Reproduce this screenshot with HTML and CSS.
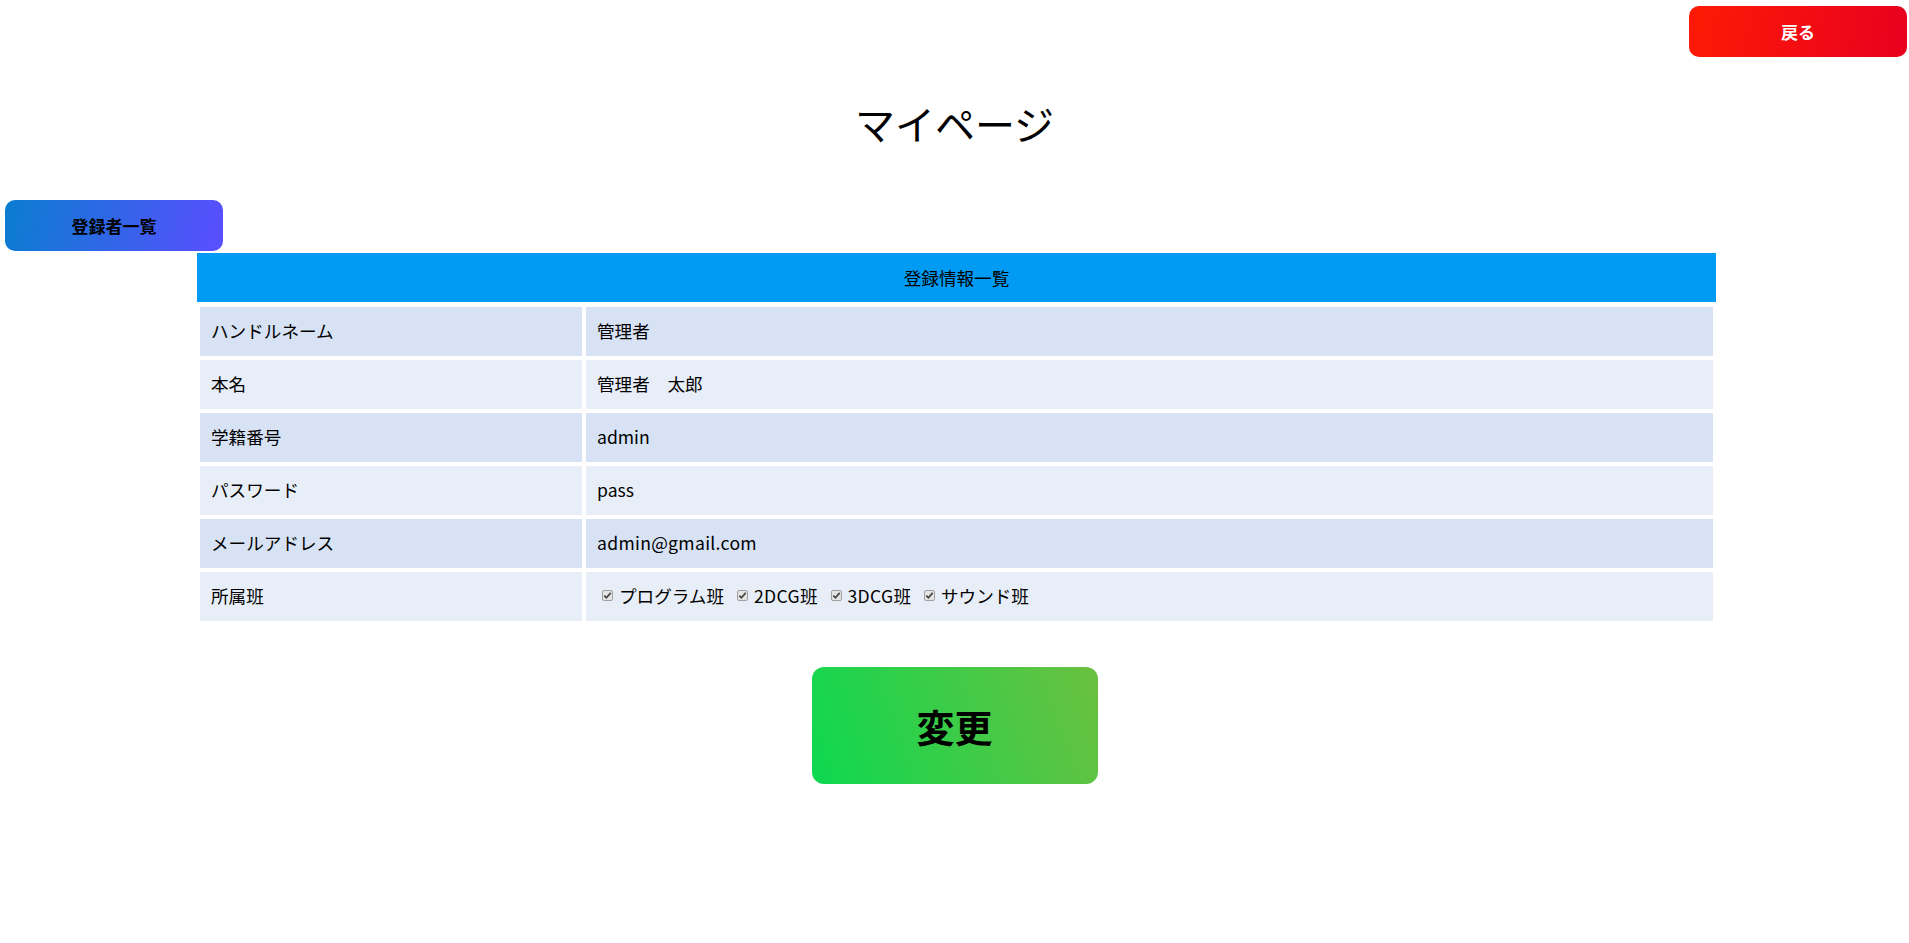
FILE: index.html
```html
<!DOCTYPE html>
<html lang="ja">
<head>
<meta charset="utf-8">
<title>マイページ</title>
<link rel="stylesheet" href="styles.css">
</head>
<body>
<div class="topbar">
  <button class="btn btn-back">戻る</button>
</div>
<h1 class="title">マイページ</h1>
<div class="subbar">
  <button class="btn btn-list">登録者一覧</button>
</div>
<section class="info">
  <div class="info-head">登録情報一覧</div>
  <div class="info-grid">
    <div class="cell odd">ハンドルネーム</div><div class="cell odd">管理者</div>
    <div class="cell even">本名</div><div class="cell even">管理者　太郎</div>
    <div class="cell odd">学籍番号</div><div class="cell odd">admin</div>
    <div class="cell even">パスワード</div><div class="cell even">pass</div>
    <div class="cell odd">メールアドレス</div><div class="cell odd latin">admin@gmail.com</div>
    <div class="cell even">所属班</div>
    <div class="cell even groups">
      <span class="grp"><span class="chk"><svg viewBox="0 0 11 11" width="11" height="11"><path d="M2.3 5.6 L4.4 7.8 L8.7 2.9" fill="none" stroke="#444" stroke-width="1.7"/></svg></span>プログラム班</span>
      <span class="grp"><span class="chk"><svg viewBox="0 0 11 11" width="11" height="11"><path d="M2.3 5.6 L4.4 7.8 L8.7 2.9" fill="none" stroke="#444" stroke-width="1.7"/></svg></span><span class="latin">2DCG</span>班</span>
      <span class="grp"><span class="chk"><svg viewBox="0 0 11 11" width="11" height="11"><path d="M2.3 5.6 L4.4 7.8 L8.7 2.9" fill="none" stroke="#444" stroke-width="1.7"/></svg></span><span class="latin">3DCG</span>班</span>
      <span class="grp"><span class="chk"><svg viewBox="0 0 11 11" width="11" height="11"><path d="M2.3 5.6 L4.4 7.8 L8.7 2.9" fill="none" stroke="#444" stroke-width="1.7"/></svg></span>サウンド班</span>
    </div>
  </div>
</section>
<div class="actions">
  <button class="btn btn-change">変更</button>
</div>
</body>
</html>
```

FILE: styles.css
```css
html, body {
  margin: 0;
  padding: 0;
  background: #ffffff;
}
body {
  font-family: "Noto Sans CJK JP", "Noto Sans", sans-serif;
  color: #000;
  font-size: 17.6px;
}
.topbar {
  display: flex;
  justify-content: flex-end;
  padding: 6px 2px 0 0;
}
.btn {
  border: none;
  font-family: "Noto Sans CJK JP", "Noto Sans", sans-serif;
  font-weight: bold;
  cursor: pointer;
  padding: 0;
}
.btn-back {
  width: 218px;
  height: 51px;
  border-radius: 10px;
  background: linear-gradient(100deg, #ff1a04 0%, #e8001f 100%);
  color: #ffffff;
  font-size: 17px;
}
.title {
  margin: 37px 0 0 0;
  text-align: center;
  font-size: 40px;
  font-weight: normal;
  line-height: 58px;
}
.subbar {
  display: flex;
  padding: 48px 0 0 5px;
}
.btn-list {
  width: 218px;
  height: 51px;
  border-radius: 10px;
  background: linear-gradient(100deg, #0a7dd0 0%, #5a4eff 100%);
  color: #000;
  font-size: 17px;
}
.info {
  width: 1519px;
  margin: 2px 0 0 197px;
}
.info-head {
  height: 49px;
  background: #019bf4;
  display: flex;
  align-items: center;
  justify-content: center;
  font-size: 17.6px;
}
.info-grid {
  display: grid;
  grid-template-columns: 382px 1fr;
  grid-auto-rows: 49px;
  gap: 4px;
  padding: 5px 3px 4px 3px;
}
.cell {
  display: flex;
  align-items: center;
  padding: 0 11px 2px 11px;
  font-size: 17.6px;
}
.latin {
  letter-spacing: 0.3px;
}
.odd { background: #d7e3f4; }
.even { background: #e8eef7; }
.groups {
  gap: 13px;
  padding-left: 16px;
}
.grp {
  display: inline-flex;
  align-items: center;
}
.chk {
  display: inline-flex;
  width: 11px;
  height: 11px;
  box-sizing: border-box;
  border: 1px solid #a0a0a0;
  border-radius: 2px;
  background: #e4e4e4;
  margin-right: 6px;
  align-items: center;
  justify-content: center;
  overflow: hidden;
}
.chk svg {
  display: block;
  flex: none;
}
.actions {
  display: flex;
  justify-content: center;
  padding-top: 42px;
}
.btn-change {
  width: 286px;
  height: 117px;
  border-radius: 12px;
  background: linear-gradient(70deg, #0dd850 0%, #6bc040 100%);
  color: #000;
  font-size: 38px;
}
```
